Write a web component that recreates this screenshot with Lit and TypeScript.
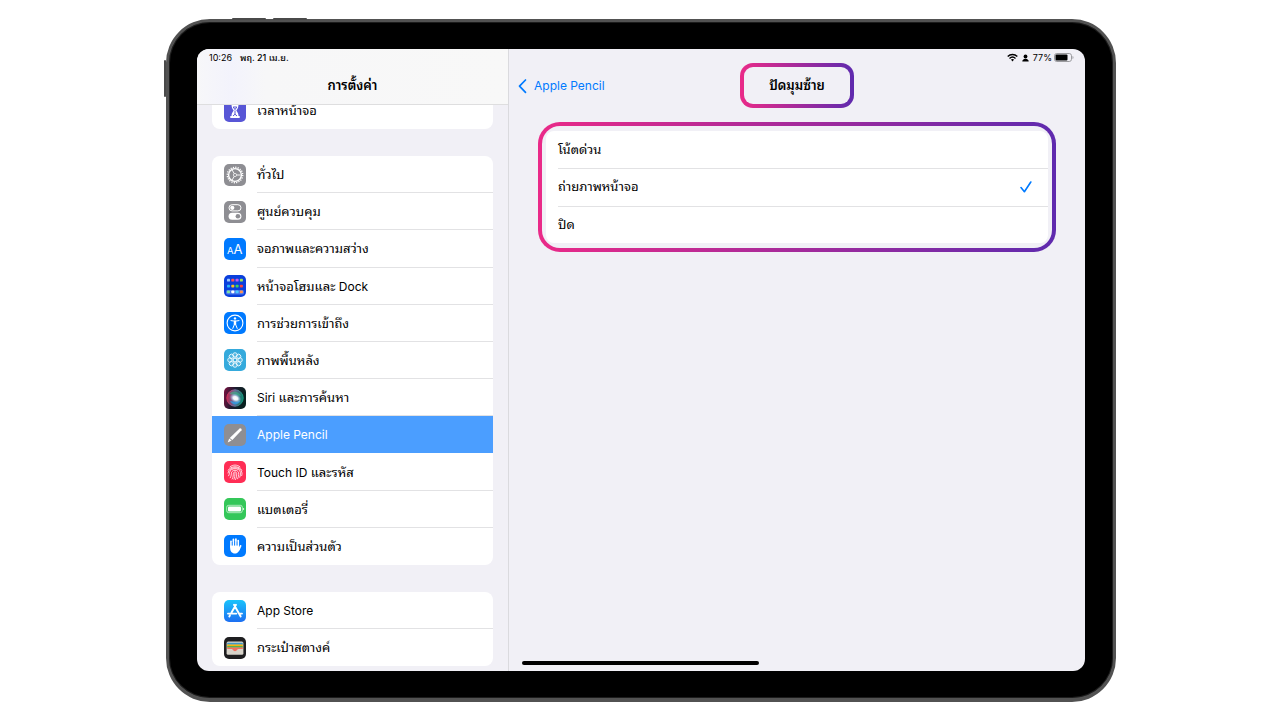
import { LitElement, html, css, svg, nothing } from "lit";
import { customElement, property, state } from "lit/decorators.js";

const range = (n: number) => Array.from({ length: n }, (_, i) => i);

const glyphs: Record<string, unknown> = {
  time: svg`<rect width="22" height="22" rx="5" fill="#5856d6"/>
    <path d="M6.500 2.500h9v2h-1c0 3-1 4.600-2.200 6 1.200 1.500 2.200 3 2.200 5.500h1.200v2H6.300v-2h1.200c0-2.500 1-4 2.200-5.500-1.200-1.400-2.200-3-2.200-6h-1z" fill="#fff"/>
    <path d="M9.200 7h3.600L11 9.600zM11 10.500v4M9 16l2-1.800L13 16" stroke="#5856d6" fill="none" stroke-width="1"/>`,
  general: svg`<rect width="22" height="22" rx="5" fill="#8e8e93"/>
    <circle cx="11" cy="11" r="7.700" fill="none" stroke="#fff" stroke-width="1.400" stroke-dasharray="1.210 1.210"/>
    <circle cx="11" cy="11" r="6.400" fill="none" stroke="#fff" stroke-width="1.400"/>
    <circle cx="11" cy="11" r="1.600" fill="none" stroke="#fff" stroke-width=".7"/>
    <path d="M12.600 11h4M10.200 9.600L8 5.800M10.200 12.400L8 16.200" stroke="#fff" stroke-width=".9"/>`,
  control: svg`<rect width="22" height="22" rx="5" fill="#8e8e93"/>
    <rect x="5" y="3.700" width="12" height="6.200" rx="3.100" fill="none" stroke="#fff" stroke-width="1"/>
    <circle cx="8.300" cy="6.800" r="2.100" fill="#fff"/>
    <rect x="4.600" y="11.800" width="12.800" height="7" rx="3.500" fill="#fff"/>
    <circle cx="13.900" cy="15.300" r="2.300" fill="#8e8e93"/>`,
  display: svg`<rect width="22" height="22" rx="5" fill="#007aff"/>
    <text x="3" y="15.500" font-family="Inter" font-size="9.500" fill="#fff">A</text>
    <text x="9.600" y="15.500" font-family="Inter" font-size="13" fill="#fff">A</text>`,
  home: svg`<rect width="22" height="22" rx="5" fill="#0a3fdc"/>
    <rect x="2" y="15" width="18" height="4.600" rx="1.500" fill="#4a78ec"/>
    ${["#9cc7ff", "#ff4f58", "#c05cf0", "#9be35a", "#28b4f5", "#ffc21a", "#3bd45a", "#ff4438", "#7fe0a0", "#fff", "#4cc8ff", "#ff9150"].map(
      (c, i) => svg`<rect x=${3 + (i % 4) * 4.3} y=${3.8 + Math.floor(i / 4) * 5.9 - (i > 7 ? 0.1 : 0)} width="3" height="2.800" rx=".7" fill=${c}/>`,
    )}`,
  access: svg`<rect width="22" height="22" rx="5" fill="#007aff"/>
    <circle cx="11" cy="11" r="7.900" fill="none" stroke="#fff" stroke-width="1.100"/>
    <circle cx="11" cy="6.400" r="1.200" fill="#fff"/>
    <path d="M7 8.600l4 .6 4-.6M11 9v3.200M10.600 12l-1.800 4.400M11.400 12l1.800 4.400" fill="none" stroke="#fff" stroke-width="1" stroke-linecap="round"/>
    <path d="M9.900 8.800h2.200l.2 3.600H9.700z" fill="#fff"/>`,
  wallpaper: svg`<rect width="22" height="22" rx="5" fill="#35aadc"/>
    ${range(8).map((i) => svg`<circle cx="11" cy="5.900" r="2.200" fill="#fff" fill-opacity=".15" stroke="#fff" stroke-width=".8" transform="rotate(${i * 45} 11 11)"/>`)}
    ${range(8).map((i) => svg`<path d="M11 9.300V8" stroke="#fff" stroke-width=".8" transform="rotate(${i * 45} 11 11)"/>`)}
    <circle cx="11" cy="11" r="1.800" fill="none" stroke="#fff" stroke-width=".8"/>`,
  siri: svg`<defs>
      <linearGradient id="sb" x1="0" x2="1" y2=".2"><stop offset="0" stop-color="#7c1040"/><stop offset=".5" stop-color="#1c1c30"/><stop offset="1" stop-color="#08201f"/></linearGradient>
      <linearGradient id="so" x1="0" x2="1" y2=".1"><stop offset="0" stop-color="#e0264f"/><stop offset=".5" stop-color="#7b74a8"/><stop offset="1" stop-color="#159b80"/></linearGradient>
      <radialGradient id="sg"><stop offset="0" stop-color="#fff"/><stop offset=".4" stop-color="#f4f9ff" stop-opacity=".95"/><stop offset="1" stop-color="#8ac0ff" stop-opacity="0"/></radialGradient>
    </defs>
    <rect width="22" height="22" rx="5" fill="url(#sb)"/>
    <circle cx="11" cy="11" r="8.200" fill="url(#so)" fill-opacity=".8" stroke="url(#so)"/>
    <path d="M6 14c3 5 8 4 10.500 0-4 1-6 1-10.500 0z" fill="#2f9fe8" opacity=".8"/>
    <path d="M5 7c4-4 9-3 12 2-5-1-8-1-12-2z" fill="#34c98b" opacity=".5"/>
    <ellipse cx="11.500" cy="11" rx="6" ry="4.400" transform="rotate(25 11 11)" fill="url(#sg)"/>`,
  pencil: svg`<rect width="22" height="22" rx="5" fill="#8e8e93"/>
    <path d="M15.600 4.500c.9-.7 2.500.6 1.900 1.700L8.400 16l-2.700-2.100z" fill="#fff"/>
    <path d="M5.200 14.600l2.400 1.900-3.900 2z" fill="#fff"/>`,
  touch: svg`<rect width="22" height="22" rx="5" fill="#ff2d55"/>
    <g fill="none" stroke="#fff" stroke-width=".8" stroke-linecap="round">
      <path d="M6 5.900c3-2.500 7-2.500 10 0M4.200 9.200C7 4.500 15 4.500 17.800 9.200M4 12c.8-7 13.200-7 14 0 0 1 0 1.800-.3 2.600M4.600 14.800c1-1.500.7-2.700 1-3.500 1-4.800 9.800-4.800 10.800 0 .2 2 0 3.500-.6 5M6.200 16.800c1.300-2 1-3.600 1.200-5 .8-3.300 6.400-3.300 7.200 0 .3 2.500-.3 4.300-1 6M8.200 18c1.200-2.200 1-4 1.200-5.800.4-1.800 2.900-1.800 3.300 0 .2 2.500-.4 4.500-1.200 6.300M11 12.300c.1 2.200-.3 4-1 5.900"/>
    </g>`,
  battery: svg`<rect width="22" height="22" rx="5" fill="#34c759"/>
    <rect x="2.700" y="7.300" width="15.600" height="7.400" rx="2" fill="none" stroke="#fff" stroke-opacity=".75" stroke-width=".8"/>
    <rect x="4" y="8.500" width="13" height="5" rx="1" fill="#fff"/><path d="M19.200 9.800c1.300.4 1.300 2 0 2.400z" fill="#fff"/>`,
  privacy: svg`<rect width="22" height="22" rx="5" fill="#007aff"/>
    <g stroke="#fff" stroke-width="1.700" stroke-linecap="round" fill="none"><path d="M7 12V6.300M9.400 11V4.400M11.900 11V4M14.200 11.500V5.600M15 14.500l1.600-3.700"/></g>
    <path d="M6.150 10.500h8.900v2.500l1-.5c-.6 3.500-2 6-5 6-3.300 0-4.900-2.500-4.900-5.500z" fill="#fff"/>
    <path d="M8.200 7v3.500M10.650 6v4.500M13.050 6.500V10.500" stroke="#007aff" stroke-width=".6"/>`,
  store: svg`<defs><linearGradient id="as" x2="0" y2="1"><stop offset="0" stop-color="#1ac3fb"/><stop offset="1" stop-color="#1d6ff2"/></linearGradient></defs>
    <rect width="22" height="22" rx="5" fill="url(#as)"/>
    <g stroke="#fff" stroke-width="1.900" stroke-linecap="round"><path d="M12 4.800L7.500 12.500M5.900 15.400l-.6 1M10 4.800l6.700 11.600M4 13.600h8.300M15.600 13.600H18"/></g>`,
  wallet: svg`<rect width="22" height="22" rx="5" fill="#1e1e20"/>
    <rect x="2.600" y="4.400" width="16.800" height="13.400" rx="1.500" fill="#d8d4ca"/>
    <path d="M3.200 5.800h15.600v2H3.200z" fill="#3f97c9"/><path d="M3.200 7.400h15.600v2.200H3.200z" fill="#f5b50b"/>
    <path d="M3.200 9h15.600v1.800H3.200z" fill="#5ab14d"/><path d="M3.200 10.600h15.600v1.400h-4.600c-.8 0-1.200 2.200-3.200 2.200s-2.400-2.200-3.200-2.200H3.200z" fill="#f2705f"/>`,
};

/* Thai runs are set one step larger than the Latin beside them. */
const thai = css`
  .thai { font-size: 13px; font-family: "Noto Sans Thai Looped", Thonburi, Loma, Garuda, Waree, "Noto Sans Thai", "Noto Sans", sans-serif; }
`;
const mixed = (text: string) =>
  text.split(/([\u0e00-\u0e7f]+)/).filter(Boolean).map((run) =>
    /[\u0e00-\u0e7f]/.test(run) ? html`<span class="thai" lang="th">${run}</span>` : run,
  );

interface Item { icon: string; label: string; }

const groups: Item[][] = [
  [{ icon: "time", label: "เวลาหน้าจอ" }],
  [
    { icon: "general", label: "ทั่วไป" },
    { icon: "control", label: "ศูนย์ควบคุม" },
    { icon: "display", label: "จอภาพและความสว่าง" },
    { icon: "home", label: "หน้าจอโฮมและ Dock" },
    { icon: "access", label: "การช่วยการเข้าถึง" },
    { icon: "wallpaper", label: "ภาพพื้นหลัง" },
    { icon: "siri", label: "Siri และการค้นหา" },
    { icon: "pencil", label: "Apple Pencil" },
    { icon: "touch", label: "Touch ID และรหัส" },
    { icon: "battery", label: "แบตเตอรี่" },
    { icon: "privacy", label: "ความเป็นส่วนตัว" },
  ],
  [
    { icon: "store", label: "App Store" },
    { icon: "wallet", label: "กระเป๋าสตางค์" },
  ],
];

@customElement("settings-row")
class SettingsRow extends LitElement {
  @property() icon = "";
  @property() label = "";
  @property({ type: Boolean }) active = false;
  @property({ type: Boolean }) divider = false;

  static styles = [thai, css`
    :host { display: grid; }
    .row {
      display: flex; align-items: stretch; gap: 11px; padding-left: 12px;
      color: #000; text-decoration: none;
    }
    .row.active { background: #4b9eff; color: #fff; }
    .icon { width: 22px; height: 22px; align-self: center; flex: none; }
    .label { flex: 1; display: flex; align-items: center; white-space: nowrap; }
    .label.divider { box-shadow: inset 0 -1px #e2e2e4; }
  `];

  render() {
    return html`<a class="row ${this.active ? "active" : ""}" href="#${this.icon}" aria-current=${this.active ? "page" : nothing}>
      <svg class="icon" viewBox="0 0 22 22" aria-hidden="true">${glyphs[this.icon]}</svg>
      <span class="label ${this.divider ? "divider" : ""}"><span>${mixed(this.label)}</span></span>
    </a>`;
  }
}

@customElement("app-root")
class AppRoot extends LitElement {
  @state() private selected = 1;
  private options = ["โน้ตด่วน", "ถ่ายภาพหน้าจอ", "ปิด"];

  static styles = [thai, css`
    :host {
      display: flex; box-sizing: border-box; height: 100vh;
      padding: 19px 164px 18px 166px; background: #fff; color: #000;
      font: 12px/16px Inter, "Noto Sans Thai Looped", "Noto Sans Thai", "Noto Sans", "Liberation Sans", sans-serif;
    }
    .tablet {
      position: relative; flex: 1; display: flex; box-sizing: border-box; min-height: 0;
      padding: 27px 28px 27px; background: #000; border-radius: 44px;
      border: 3px solid #525252; border-bottom-width: 4px;
      box-shadow: inset 0 0 0 1px #1c1c1c;
    }
    .key { position: absolute; background: #4a4a4a; border-radius: 1px; }
    .key.up { left: 63px; top: -4px; width: 34px; height: 2px; }
    .key.down { left: 104px; top: -4px; width: 34px; height: 2px; }
    .key.power { left: -5px; top: 38px; width: 2px; height: 37px; }
    .screen {
      flex: 1; display: grid; grid-template: minmax(0, 1fr) / 312px 1fr; overflow: hidden;
      background: #f1f0f6; border-radius: 12px;
    }
    .side { display: flex; flex-direction: column; box-sizing: border-box; border-right: 1px solid #dadade; min-height: 0; }
    .head {
      position: relative; z-index: 1; flex: none;
      background: linear-gradient(90deg, #f7f7f9, #f3f3fc 11%, #f7f7f8 22%, #f8f8f8);
      border-bottom: 1px solid #dededf;
    }
    .status { display: flex; align-items: center; height: 17px; font-size: 9px; line-height: 12px; }
    .clock { gap: 8px; padding-left: 12px; }
    .date { font-weight: 500; }
    .title { margin: 0; font-size: 12px; line-height: 16px; font-weight: 600; white-space: nowrap; }
    .head .title { display: grid; place-items: center; height: 38px; }
    .scroll {
      flex: 1; min-height: 0; display: flex; flex-direction: column; justify-content: flex-end;
      gap: 27px; padding: 0 15px 5px; overflow: hidden;
    }
    .group {
      flex: none; display: grid; grid-auto-rows: minmax(37px, 1fr);
      background: #fff; border-radius: 8px; overflow: hidden;
    }
    .group.long { min-height: 409px; }
    .detail { display: flex; flex-direction: column; min-width: 0; }
    .system { justify-content: flex-end; gap: 4px; padding-right: 11px; }
    .wifi { width: 11px; height: 9px; }
    .person { width: 7px; height: 8px; }
    .cell { width: 20px; height: 9px; }
    .power-level { display: flex; align-items: center; gap: 2px; }
    .nav { display: grid; grid-template: 39px / 1fr auto 1fr; align-items: center; }
    .back {
      display: flex; align-items: center; gap: 6px; padding-left: 9px; justify-self: start;
      color: #007aff; text-decoration: none;
    }
    .chevron { width: 10px; height: 16px; }
    .ring {
      box-sizing: border-box; border: 4px solid transparent;
      background: linear-gradient(#f1f0f6, #f1f0f6) padding-box,
        linear-gradient(90deg, #ea2a88, #5f2aae) border-box;
    }
    .nav .ring { display: grid; place-items: center; padding: 0 25px; height: 45px; border-radius: 13px; }
    .choices { margin: 17px 29px 0; padding: 5px 4px; border-radius: 22px; }
    .options {
      display: grid; grid-auto-rows: minmax(37px, 1fr);
      min-height: 112px; background: #fff; border-radius: 8px;
    }
    .option { display: flex; align-items: center; margin-left: 12px; padding-right: 16px; }
    .option + .option { box-shadow: inset 0 1px #e2e2e4; }
    .text { flex: 1; }
    .radio { appearance: none; position: absolute; margin: 0; opacity: 0; }
    .tick { width: 12px; height: 12px; }
    .bar { width: 237px; height: 4px; margin: auto 0 6px 13px; border-radius: 2px; background: #000; }
  `];

  render() {
    return html`<main class="tablet">
      <i class="key up"></i><i class="key down"></i><i class="key power"></i>
      <div class="screen">
        <nav class="side">
          <header class="head">
            <div class="status clock"><span>10:26</span><span class="date">พฤ. 21 เม.ย.</span></div>
            <h1 class="title">${mixed("การตั้งค่า")}</h1>
          </header>
          <div class="scroll">
            ${groups.map((group) => html`<div class="group ${group.length > 2 ? "long" : ""}">
              ${group.map((item, i) => html`<settings-row .icon=${item.icon} .label=${item.label}
                .active=${item.icon === "pencil"}
                .divider=${i < group.length - 1 && item.icon !== "pencil"}></settings-row>`)}
            </div>`)}
          </div>
        </nav>
        <section class="detail">
          <div class="status system">
            <svg class="wifi" viewBox="0 0 11 9" fill="none" stroke="#000" stroke-width="1.400" aria-hidden="true">
              <path d="M.7 3.500c2.700-2.600 6.900-2.600 9.600 0M2.500 5.400c1.700-1.600 4.300-1.600 6 0"/><path d="M3.900 6.600c1-.8 2.200-.8 3.200 0L5.500 8.400z" fill="#000" stroke="none"/>
            </svg>
            <svg class="person" viewBox="0 0 7 8" aria-hidden="true"><circle cx="3.500" cy="2.500" r="1.900"/><path d="M.3 7.500c0-3.600 6.400-3.600 6.400 0z"/></svg>
            <span class="power-level">77%<svg class="cell" viewBox="0 0 20 9" aria-hidden="true">
              <rect x=".5" y=".5" width="17" height="8" rx="2.300" fill="none" stroke="#9b9b9f"/><rect x="1.500" y="1.500" width="12" height="6" rx="1"/>
              <path d="M18.500 3v3c1.300-.4 1.300-2.600 0-3z" fill="#9b9b9f"/></svg></span>
          </div>
          <div class="nav">
            <a class="back" href="#pencil">
              <svg class="chevron" viewBox="0 0 10 16" fill="none" stroke="currentColor" stroke-width="1.700" stroke-linecap="round" stroke-linejoin="round" aria-hidden="true"><path d="M7.500 2L1.500 8.200l6 6.200"/></svg>Apple Pencil</a>
            <div class="ring"><h2 class="title">${mixed("ปัดมุมซ้าย")}</h2></div>
          </div>
          <div class="ring choices">
            <div class="options" role="radiogroup" aria-label="ปัดมุมซ้าย">
              ${this.options.map((text, i) => html`<label class="option">
                <input class="radio" type="radio" name="swipe" .checked=${i === this.selected} @change=${() => (this.selected = i)} />
                <span class="text">${mixed(text)}</span>
                ${i === this.selected ? html`<svg class="tick" viewBox="0 0 12 12" fill="none" stroke="#007aff" stroke-width="1.600" stroke-linecap="round" stroke-linejoin="round" aria-hidden="true"><path d="M1 6.600L4.400 10.700 10.800 1"/></svg>` : nothing}
              </label>`)}
            </div>
          </div>
          <div class="bar"></div>
        </section>
      </div>
    </main>`;
  }
}
